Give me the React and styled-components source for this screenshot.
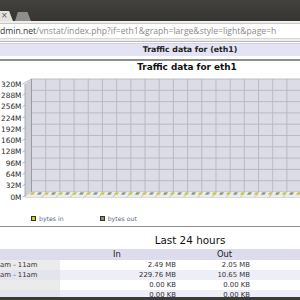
import React from "react";
import styled, { createGlobalStyle } from "styled-components";

const GlobalStyle = createGlobalStyle`
  html, body {
    margin: 0;
    width: 300px;
    height: 300px;
    overflow: hidden;
    background: #fff;
    font-family: "DejaVu Sans", Verdana, sans-serif;
  }
`;

const URL_HOST = "dmin.net";
const URL_PATH = "/vnstat/index.php?if=eth1&graph=large&style=light&page=h";

const LABELS = [320, 288, 256, 224, 192, 160, 128, 96, 64, 32, 0];
const STEP_Y = 11.3;
const TOP = 80;
const LEFT = 31.5;
const STEP_X = 14.19;

const HOURS = [
  { label: "am - 11am", rx: "2.49 MB", tx: "2.05 MB" },
  { label: "am - 11am", rx: "229.76 MB", tx: "10.65 MB" },
  { label: "", rx: "0.00 KB", tx: "0.00 KB" },
  { label: "", rx: "0.00 KB", tx: "0.00 KB" },
];

function TrafficChart() {
  const bottom = TOP + STEP_Y * 10;
  const cols = [];
  for (let x = LEFT + STEP_X; x < 300; x += STEP_X) cols.push(x);
  const stripes = [];
  for (let x = LEFT; x < 304; x += 7) stripes.push(x);

  return (
    <ChartSvg width="300" height="131" viewBox="0 74 300 131">
      <rect x={LEFT} y={TOP} width={300 - LEFT} height={bottom - TOP} fill="#dcdce6" />
      {cols.map((x) => (
        <line key={x} x1={x} y1={TOP} x2={x} y2={bottom} stroke="#b6b6c2" strokeWidth="0.9" />
      ))}
      {LABELS.map((v, i) => {
        const y = TOP + STEP_Y * i;
        return (
          <g key={v}>
            <line x1={LEFT} y1={y} x2="300" y2={y} stroke="#b6b6c2" strokeWidth="0.9" />
            <line x1="22.5" y1={y + 5} x2={LEFT} y2={y} stroke="#a6a6ae" strokeWidth="0.8" />
            <AxisLabel x="21.5" y={y + 7.6} textAnchor="end">
              {v}M
            </AxisLabel>
          </g>
        );
      })}
      <polygon
        points={`25,${TOP + 5} ${LEFT},${TOP} ${LEFT},${bottom} 25,${bottom + 5}`}
        fill="#cfcfd8"
      />
      <line x1="25" y1={TOP + 5} x2="25" y2={bottom + 5} stroke="#a0a0a8" strokeWidth="0.8" />
      <line x1={LEFT} y1={TOP} x2={LEFT} y2={bottom} stroke="#9a9aa4" strokeWidth="1" />
      <polygon
        points={`25,${bottom + 5} ${LEFT},${bottom} 300,${bottom} 300,${bottom + 5}`}
        fill="#ececf0"
      />
      {stripes.map((x, i) => (
        <polygon
          key={x}
          points={`${x},${bottom + 0.3} ${x + 3.5},${bottom + 0.3} ${x + 2},${bottom + 2.8} ${x - 1.5},${bottom + 2.8}`}
          fill={i % 2 ? "#8d9c72" : "#c9c936"}
        />
      ))}
      {cols.map((x) => (
        <line key={x} x1={x - 1.5} y1={bottom + 3} x2={x - 5} y2={bottom + 6} stroke="#b0b0b8" strokeWidth="0.7" />
      ))}
      <line x1="25" y1={bottom + 5.5} x2="300" y2={bottom + 5.5} stroke="#d2d2d8" strokeWidth="0.8" />
    </ChartSvg>
  );
}

export default function App() {
  return (
    <Window>
      <GlobalStyle />
      <TabStrip>
        <ActiveTab>×</ActiveTab>
        <IdleTab />
      </TabStrip>
      <AddressBar>
        <UrlBox>
          <Host>{URL_HOST}</Host>
          <Path>{URL_PATH}</Path>
        </UrlBox>
      </AddressBar>
      <Page>
        <PageHeader>Traffic data for (eth1)</PageHeader>
        <Rule $size={2} $gap={3} />
        <ChartTitle>Traffic data for eth1</ChartTitle>
        <TrafficChart />
        <Legend>
          <LegendItem>
            <Swatch $color="#c9c91e" />
            bytes in
          </LegendItem>
          <LegendItem>
            <Swatch $color="#7f9a5c" />
            bytes out
          </LegendItem>
        </Legend>
        <Rule $size={1} $gap={0} />
        <SectionTitle>Last 24 hours</SectionTitle>
        <StatsTable>
          <colgroup>
            <col style={{ width: 60 }} />
            <col style={{ width: 120 }} />
            <col style={{ width: 84 }} />
            <col />
          </colgroup>
          <thead>
            <tr>
              <HeadCell />
              <HeadCell $padRight={6}>In</HeadCell>
              <HeadCell $padLeft={5}>Out</HeadCell>
              <HeadCell />
            </tr>
          </thead>
          <tbody>
            {HOURS.map((h, i) => (
              <Row key={i} $alt={i % 2 === 1}>
                <LabelCell>{h.label}</LabelCell>
                <ValueCell $padRight={4}>{h.rx}</ValueCell>
                <ValueCell $padRight={14}>{h.tx}</ValueCell>
                <ValueCell />
              </Row>
            ))}
          </tbody>
        </StatsTable>
      </Page>
      <StatusBar />
    </Window>
  );
}

const Window = styled.div`
  width: 300px;
  height: 300px;
  display: flex;
  flex-direction: column;
  overflow: hidden;
`;

const TabStrip = styled.div`
  height: 21px;
  flex: none;
  display: flex;
  align-items: flex-end;
  gap: 2px;
  background: linear-gradient(#43423e, #353430);
`;

const ActiveTab = styled.div`
  width: 13px;
  height: 10px;
  background: #e4e2dd;
  clip-path: polygon(0 0, 70% 0, 100% 100%, 0 100%);
  color: #555;
  font-family: "DejaVu Sans", sans-serif;
  font-size: 8px;
  line-height: 10px;
  padding-left: 1px;
  box-sizing: border-box;
`;

const IdleTab = styled.div`
  width: 16px;
  height: 9px;
  background: #8f8d89;
  clip-path: polygon(18% 0, 78% 0, 100% 100%, 0 100%);
`;

const AddressBar = styled.div`
  height: 21px;
  flex: none;
  background: #efeeec;
  border-bottom: 1px solid #b8b8b8;
  padding: 2px 0 2px 0;
  box-sizing: border-box;
`;

const UrlBox = styled.div`
  height: 16px;
  background: #fff;
  border-top: 1px solid #c8c8c8;
  border-bottom: 1px solid #d8d8d8;
  box-sizing: border-box;
  font-family: "Open Sans", sans-serif;
  font-size: 8.6px;
  line-height: 14px;
  white-space: nowrap;
  overflow: hidden;
`;

const Host = styled.span`
  color: #333;
`;

const Path = styled.span`
  color: #8a8a8a;
`;

const Page = styled.div`
  flex: 1;
  overflow: hidden;
  background: #fff;
`;

const PageHeader = styled.div`
  margin-top: 1px;
  height: 13px;
  background: #e3e3f3;
  border-top: 1px solid #d0d0e0;
  box-sizing: border-box;
  padding-left: 80px;
  text-align: center;
  font-size: 7.8px;
  font-weight: bold;
  line-height: 12px;
  color: #222;
`;

const Rule = styled.div`
  margin-top: ${(p) => p.$gap}px;
  height: ${(p) => p.$size}px;
  background: #8e8e8e;
`;

const ChartTitle = styled.div`
  height: 12px;
  line-height: 12px;
  padding-left: 74px;
  text-align: center;
  font-size: 8.9px;
  font-weight: bold;
  color: #111;
`;

const ChartSvg = styled.svg`
  display: block;
`;

const AxisLabel = styled.text`
  font-family: "DejaVu Sans", sans-serif;
  font-size: 7.4px;
  fill: #2a2a2a;
`;

const Legend = styled.div`
  height: 22px;
  box-sizing: border-box;
  padding: 6px 0 0 31px;
  display: flex;
  align-items: center;
  gap: 36px;
`;

const LegendItem = styled.div`
  display: flex;
  align-items: center;
  gap: 3px;
  font-size: 6.2px;
  color: #5c6a88;
`;

const Swatch = styled.span`
  width: 5px;
  height: 5px;
  box-sizing: border-box;
  border: 1px solid #333;
  background: ${(p) => p.$color};
`;

const SectionTitle = styled.div`
  height: 22px;
  box-sizing: border-box;
  padding: 5px 0 0 80px;
  line-height: 16px;
  text-align: center;
  font-size: 10.4px;
  color: #111;
`;

const StatsTable = styled.table`
  width: 300px;
  border-collapse: collapse;
  table-layout: fixed;
  font-size: 6.9px;
  color: #333;
`;

const HeadCell = styled.th`
  height: 11px;
  padding: 0 ${(p) => p.$padRight || 0}px 0 ${(p) => p.$padLeft || 0}px;
  background: #dcdcec;
  font-size: 8.4px;
  font-weight: normal;
  line-height: 11px;
  color: #1a1a1a;
  text-align: center;
`;

const Row = styled.tr`
  height: 10px;
  background: ${(p) => (p.$alt ? "#eeeef8" : "#fff")};
  td:first-child {
    background: ${(p) => (p.$alt ? "#e4e4ee" : "#ebebeb")};
  }
`;

const LabelCell = styled.td`
  padding: 0;
  line-height: 10px;
  white-space: nowrap;
  overflow: hidden;
`;

const ValueCell = styled.td`
  padding: 0 ${(p) => p.$padRight || 0}px 0 0;
  line-height: 10px;
  text-align: right;
  white-space: nowrap;
`;

const StatusBar = styled.div`
  height: 3px;
  flex: none;
  background: #3a3a38;
`;
